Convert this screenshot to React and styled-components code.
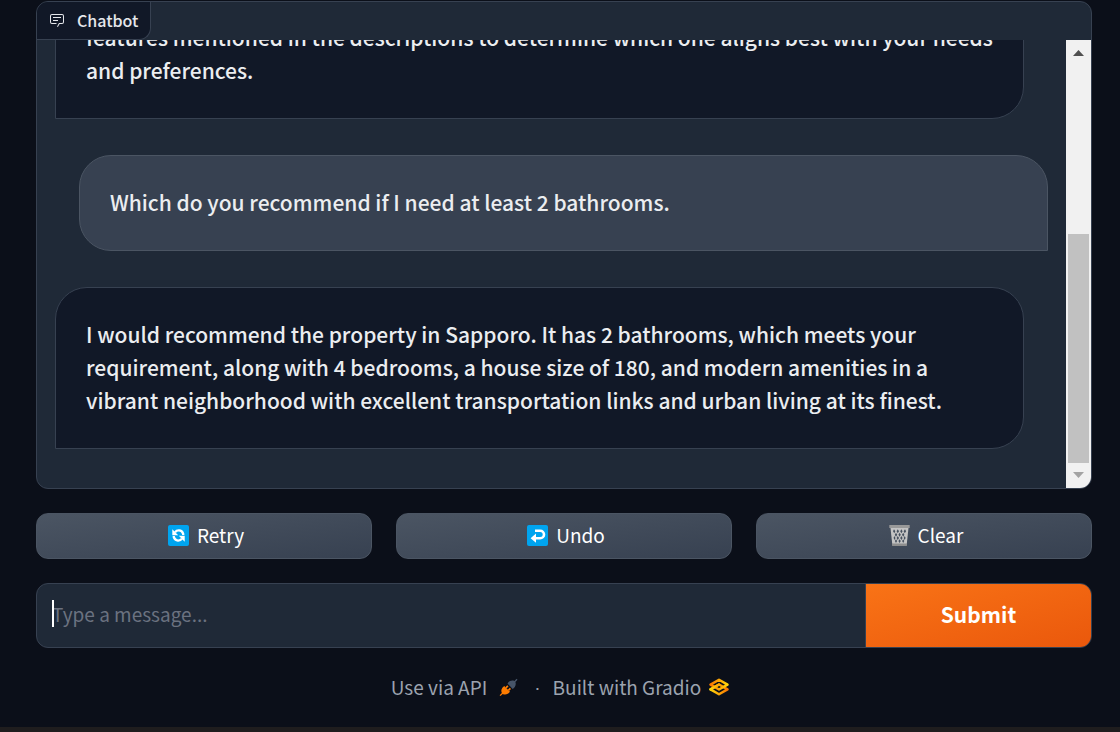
import React from "react";
import styled, { createGlobalStyle, css } from "styled-components";

const GlobalStyle = createGlobalStyle`
  *, *::before, *::after { box-sizing: border-box; }
  body {
    margin: 0;
    background: #0b0f19;
    color: #ebedf0;
    font-family: "Noto Sans CJK SC", "Noto Sans", sans-serif;
  }
  button, input { font: inherit; }
`;

const Page = styled.div`
  display: flex;
  flex-direction: column;
  min-height: 100vh;
`;

const Main = styled.main`
  display: flex;
  flex-direction: column;
  gap: 24px;
  flex: 1;
  padding: 1px 28px 0 36px;
`;

const ChatCard = styled.section`
  position: relative;
  display: flex;
  height: 488px;
  padding-top: 38px;
  border: 1px solid #374151;
  border-radius: 12px;
  background: #1f2937;
  overflow: hidden;
`;

const CardLabel = styled.h2`
  position: absolute;
  top: 0;
  left: 0;
  display: flex;
  align-items: center;
  gap: 12px;
  height: 38px;
  margin: 0;
  padding: 0 12px 2px;
  border: solid #374151;
  border-width: 0 1px 1px 0;
  border-bottom-right-radius: 12px;
  background: #111827;
  color: #e5e7eb;
  font-size: 16px;
  font-weight: 500;
  line-height: 24px;
`;

const Messages = styled.div`
  display: flex;
  flex-direction: column;
  justify-content: flex-end;
  gap: 36px;
  flex: 1;
  padding: 0 18px 39px;
  overflow: hidden;
`;

const Bubble = styled.p`
  flex: none;
  margin: 0;
  padding: 30px 30px 31px;
  border: 1px solid #374151;
  font-size: 21px;
  font-weight: 500;
  line-height: 33px;
  ${({ $from }) =>
    $from === "user"
      ? css`
          margin-left: 24px;
          border-color: #4b5563;
          border-radius: 32px 32px 0 32px;
          background: #374151;
        `
      : css`
          margin-right: 24px;
          border-radius: 32px 32px 32px 0;
          background: #111827;
        `}
`;

const Scrollbar = styled.div`
  display: flex;
  flex-direction: column;
  justify-content: space-between;
  width: 25px;
  padding: 10px 2px;
  background: #f1f1f1;
`;

const Arrow = styled.svg`
  display: block;
  width: 11px;
  height: 6px;
  margin: 0 auto;
  fill: ${({ $muted }) => ($muted ? "#a3a3a3" : "#505050")};
`;

const Thumb = styled.div`
  height: 229px;
  margin: auto 0 9px;
  background: #c1c1c1;
`;

const ButtonRow = styled.div`
  display: grid;
  grid-template-columns: repeat(3, 1fr);
  gap: 24px;
`;

const ActionButton = styled.button`
  display: flex;
  align-items: center;
  justify-content: center;
  gap: 8px;
  height: 46px;
  padding: 0 0 2px 4px;
  border: 1px solid #4b5563;
  border-radius: 12px;
  background: linear-gradient(to bottom right, #4b5563, #374151);
  color: #fff;
  font-size: 19px;
  font-weight: 400;
  line-height: 28px;
`;

const Composer = styled.form`
  position: relative;
  display: flex;
  height: 65px;
  border: 1px solid #374151;
  border-radius: 12px;
  background: #1f2937;
  overflow: hidden;
`;

const MessageInput = styled.input`
  flex: 1;
  min-width: 0;
  padding: 0 15px 4px;
  border: 0;
  border-right: 1px solid #374151;
  outline: 0;
  background: transparent;
  color: #f3f4f6;
  font-size: 19px;
  &::placeholder { color: #6b7280; opacity: 1; }
`;

const Caret = styled.span`
  position: absolute;
  top: 16px;
  left: 15px;
  width: 2px;
  height: 27px;
  background: #fff;
`;

const SubmitButton = styled.button`
  width: 225px;
  padding: 0 0 4px;
  border: 0;
  background: linear-gradient(to bottom right, #f97316, #ea580c);
  color: #fff;
  font-size: 21px;
  font-weight: 700;
`;

const Footer = styled.footer`
  display: flex;
  align-items: center;
  justify-content: center;
  gap: 12px;
  height: 32px;
  margin-right: 8px;
  color: #9ca3af;
  font-size: 19px;
  line-height: 32px;
`;

const FooterLink = styled.a`
  display: flex;
  align-items: center;
  gap: ${({ $gap }) => $gap}px;
  padding-bottom: 2px;
  color: inherit;
  text-decoration: none;
`;

const Separator = styled.span`
  margin-left: 4px;
  font-family: "Liberation Sans", sans-serif;
`;

const BottomBar = styled.div`
  height: 5px;
  background: #1f1d1e;
`;

const ChatIcon = () => (
  <svg width="16" height="16" viewBox="0 0 32 32" fill="currentColor" aria-hidden="true">
    <path d="M17.74 30L16 29l4-7h6a2 2 0 0 0 2-2V8a2 2 0 0 0-2-2H6a2 2 0 0 0-2 2v12a2 2 0 0 0 2 2h9v2H6a4 4 0 0 1-4-4V8a4 4 0 0 1 4-4h20a4 4 0 0 1 4 4v12a4 4 0 0 1-4 4h-4.84Z" />
    <path d="M8 10h16v2H8zm0 6h10v2H8z" />
  </svg>
);

const RetryIcon = () => (
  <svg width="21" height="21" viewBox="0 0 21 21" aria-hidden="true">
    <rect width="21" height="21" rx="2" fill="#00a4ef" />
    <g fill="none" stroke="#fff" strokeWidth="2.3">
      <path d="M7 7.4C8.6 5 13.6 4.2 15.2 8.8V10" />
      <path d="M14 13.6C12.4 16 7.4 16.8 5.8 12.2V11" />
    </g>
    <path d="M4.3 4.3v5.9h5.9zM16.7 16.7v-5.9h-5.9z" fill="#fff" />
  </svg>
);

const UndoIcon = () => (
  <svg width="21" height="21" viewBox="0 0 21 21" aria-hidden="true">
    <rect width="21" height="21" rx="2" fill="#00a4ef" />
    <path d="M8 5.7h5.2a3.8 3.8 0 0 1 0 7.6H8" fill="none" stroke="#fff" strokeWidth="2.6" />
    <path d="M3.6 13.3L9 8.6v9.2z" fill="#fff" />
  </svg>
);

const TrashIcon = () => (
  <svg width="21" height="21" viewBox="0 0 21 21" aria-hidden="true">
    <path d="M1.4 2h18.2l-2 18.6H3.4z" fill="#c4c4c4" />
    <path d="M.3 0h20.4v3H.3z" fill="#999" />
    <path d="M3 18.4h15l-.3 2.6H3.3z" fill="#8e8e8e" />
    <path
      d="M5 4.200l1.300 2-1 2-1.300-2zM8.800 4.200l1.200 2-1.200 2-1.200-2zM12.400 4.200l1.200 2-1.200 2-1.200-2zM16 4.200l1.100 2-1.300 2-1.200-2zM7 7.700l1.200 2-1.200 2-1.200-2zM10.600 7.700l1.200 2-1.200 2-1.200-2zM14.200 7.700l1.200 2-1.200 2-1.200-2zM5.300 11l1.200 2-1 2-.9-2zM8.800 11l1.200 2-1.200 2-1.200-2zM12.400 11l1.200 2-1.200 2-1.200-2zM15.800 11l.8 2-1 2-.9-2zM7 14.300l1.100 1.800-1.100 1.800-1.100-1.800zM10.600 14.300l1.200 1.800-1.200 1.800-1.200-1.800zM14.200 14.300l1.100 1.800-1.100 1.800-1.100-1.800z"
      fill="#46505e"
    />
  </svg>
);

const PlugIcon = () => (
  <svg width="19" height="19" viewBox="0 0 19 19" aria-hidden="true">
    <g fill="#475569">
      <path d="M8.500 5.500C10 2.600 13.200 1.800 15.400 2.900L17.600.8l.9.900-2.100 2.200c1 2.600-.2 5.700-2.700 7.100z" />
    </g>
    <g fill="#ff7c00">
      <path d="M5.200 8L11 13.800c-2 2.600-4.800 3.300-7.300 2.100L1.500 18.100l-.9-.9 2.200-2.200C1.600 12.500 2.700 9.700 5.200 8z" />
      <path d="M6.300 9.300l2-2.100 1.200 1.200-2 2.100zM8.800 11.800l2-2.100 1.200 1.200-2 2.100z" />
    </g>
  </svg>
);

const GradioIcon = () => (
  <svg width="20" height="18" viewBox="50 76 475 424" aria-hidden="true">
    <defs>
      <linearGradient id="lowerRing" x1="86" y1="344" x2="489" y2="344" gradientUnits="userSpaceOnUse">
        <stop stopColor="#ffd60a" />
        <stop offset="1" stopColor="#f97700" />
      </linearGradient>
      <linearGradient id="upperRing" x1="86" y1="231" x2="489" y2="231" gradientUnits="userSpaceOnUse">
        <stop stopColor="#f97700" />
        <stop offset="1" stopColor="#ffd60a" />
      </linearGradient>
    </defs>
    <g fill="none" strokeWidth="59" strokeLinejoin="round" strokeLinecap="round">
      <path d="M287.500 229L86 344.500L287.500 460L489 344.500Z" stroke="url(#lowerRing)" />
      <path d="M287.500 116L86 231.500L287.500 347L489 231.500Z" stroke="url(#upperRing)" />
      <path d="M86 344L288 229" stroke="url(#lowerRing)" />
    </g>
  </svg>
);

const messages = [
  {
    from: "bot",
    text: "features mentioned in the descriptions to determine which one aligns best with your needs and preferences.",
  },
  { from: "user", text: "Which do you recommend if I need at least 2 bathrooms." },
  {
    from: "bot",
    text: "I would recommend the property in Sapporo. It has 2 bathrooms, which meets your requirement, along with 4 bedrooms, a house size of 180, and modern amenities in a vibrant neighborhood with excellent transportation links and urban living at its finest.",
  },
];

const actions = [
  { label: "Retry", Icon: RetryIcon },
  { label: "Undo", Icon: UndoIcon },
  { label: "Clear", Icon: TrashIcon },
];

export default function App() {
  return (
    <Page>
      <GlobalStyle />
      <Main>
        <ChatCard>
          <CardLabel>
            <ChatIcon />
            Chatbot
          </CardLabel>
          <Messages>
            {messages.map(({ from, text }) => (
              <Bubble key={text} $from={from}>{text}</Bubble>
            ))}
          </Messages>
          <Scrollbar aria-hidden="true">
            <Arrow viewBox="0 0 11 6"><path d="M0 6L5.500 0L11 6z" /></Arrow>
            <Thumb />
            <Arrow $muted viewBox="0 0 11 6"><path d="M0 0h11L5.500 6z" /></Arrow>
          </Scrollbar>
        </ChatCard>
        <ButtonRow>
          {actions.map(({ label, Icon }) => (
            <ActionButton key={label} type="button">
              <Icon />
              {label}
            </ActionButton>
          ))}
        </ButtonRow>
        <Composer onSubmit={(event) => event.preventDefault()}>
          <MessageInput type="text" aria-label="Message" placeholder="Type a message..." />
          <Caret />
          <SubmitButton type="submit">Submit</SubmitButton>
        </Composer>
        <Footer>
          <FooterLink href="#api" $gap={12}>
            Use via API
            <PlugIcon />
          </FooterLink>
          <Separator>·</Separator>
          <FooterLink href="#gradio" $gap={8}>
            Built with Gradio
            <GradioIcon />
          </FooterLink>
        </Footer>
      </Main>
      <BottomBar />
    </Page>
  );
}
